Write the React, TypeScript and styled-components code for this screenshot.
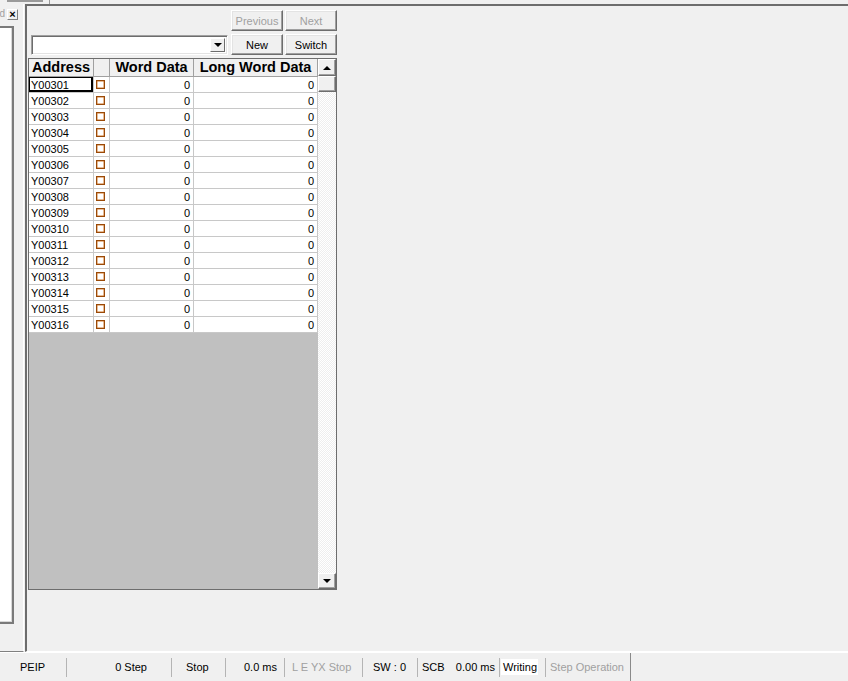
import React from 'react';
import styled, { createGlobalStyle } from 'styled-components';

const GlobalStyle = createGlobalStyle`
  html, body {
    margin: 0;
    padding: 0;
    background: #f0f0f0;
  }
  body {
    font-family: "Liberation Sans", Arial, sans-serif;
    overflow: hidden;
  }
`;

const Window = styled.div`
  width: 848px;
  height: 681px;
  display: flex;
  flex-direction: column;
  background: #f0f0f0;
  overflow: hidden;
`;

const TopStrip = styled.div`
  height: 4px;
  flex-shrink: 0;
  display: flex;
`;

const TabStub = styled.div`
  margin-left: 7px;
  width: 36px;
  height: 2px;
  background: #9a9a9a;
`;

const TabEdge = styled.div`
  margin-left: 6px;
  width: 1px;
  height: 4px;
  background: #9a9a9a;
`;

const Body = styled.div`
  flex: 1;
  display: flex;
  min-height: 0;
`;

const LeftDock = styled.div`
  width: 23px;
  margin-right: 1px;
  display: flex;
  flex-direction: column;
  border-right: 1px solid #ffffff;
  border-bottom: 1px solid #808080;
  overflow: hidden;
`;

const DockHeader = styled.div`
  height: 12px;
  padding-top: 4px;
  display: flex;
  align-items: center;
`;

const DockTitle = styled.span`
  width: 5px;
  overflow: hidden;
  direction: rtl;
  font-size: 10px;
  color: #a0a0a0;
  line-height: 12px;
`;

const CloseButton = styled.div`
  margin-left: 2px;
  width: 11px;
  height: 11px;
  box-sizing: border-box;
  border: 1px solid;
  border-color: #ffffff #808080 #808080 #ffffff;
  display: flex;
  align-items: center;
  justify-content: center;
  font-size: 11px;
  font-weight: bold;
  line-height: 9px;
  color: #000;
`;

const DockPanel = styled.div`
  margin-top: 6px;
  width: 14px;
  height: 598px;
  box-sizing: border-box;
  background: #ffffff;
  border-top: 2px solid #7a7a7a;
  border-right: 2px solid #7a7a7a;
  border-bottom: 2px solid #7a7a7a;
  box-shadow: inset -1px -1px 0 #d8d8d8;
`;

const Workspace = styled.div`
  flex: 1;
  border-top: 2px solid #6d6d6d;
  border-left: 2px solid #6d6d6d;
  border-bottom: 1px solid #ffffff;
  padding: 4px 0 0 1px;
  display: flex;
  flex-direction: column;
`;

const Controls = styled.div`
  width: 309px;
  display: flex;
  flex-direction: column;
`;

const ButtonRow = styled.div`
  height: 21px;
  display: flex;
  align-items: center;
  justify-content: flex-end;
  gap: 2px;
  & + & {
    margin-top: 3px;
  }
`;

const Button = styled.div<{ $disabled?: boolean }>`
  width: 52px;
  height: 21px;
  box-sizing: border-box;
  border: 1px solid;
  border-color: #ffffff #6d6d6d #6d6d6d #ffffff;
  box-shadow: inset -1px -1px 0 #a0a0a0, inset 1px 1px 0 #e3e3e3;
  background: #f0f0f0;
  font-size: 11px;
  color: ${({ $disabled }) => ($disabled ? '#a0a0a0' : '#000000')};
  display: flex;
  align-items: center;
  justify-content: center;
`;

const Combo = styled.div`
  margin: 0 auto 0 3px;
  width: 197px;
  height: 20px;
  box-sizing: border-box;
  border: 1px solid;
  border-color: #a0a0a0 #ffffff #ffffff #a0a0a0;
  box-shadow: inset 1px 1px 0 #6d6d6d, inset -1px -1px 0 #e3e3e3;
  background: #ffffff;
  display: flex;
  justify-content: flex-end;
  padding: 2px;
`;

const ComboButton = styled.div`
  width: 15px;
  height: 14px;
  box-sizing: border-box;
  border: 1px solid;
  border-color: #ffffff #6d6d6d #6d6d6d #ffffff;
  background: #f0f0f0;
  display: flex;
  align-items: center;
  justify-content: center;
`;

const Arrow = styled.div<{ $dir: 'up' | 'down' }>`
  width: 0;
  height: 0;
  border-left: 4px solid transparent;
  border-right: 4px solid transparent;
  ${({ $dir }) =>
    $dir === 'up' ? 'border-bottom: 4px solid #000;' : 'border-top: 4px solid #000;'}
`;

const Grid = styled.div`
  margin-top: 3px;
  width: 309px;
  height: 532px;
  box-sizing: border-box;
  border: 1px solid #6d6d6d;
  display: flex;
`;

const TableArea = styled.div`
  flex: 1;
  display: flex;
  flex-direction: column;
`;

const Row = styled.div`
  display: grid;
  grid-template-columns: 65px 16px 84px 124px;
`;

const HeadCell = styled.div`
  height: 18px;
  box-sizing: border-box;
  background: #f0f0f0;
  border-right: 1px solid #a0a0a0;
  border-bottom: 1px solid #a0a0a0;
  font-size: 14.5px;
  font-weight: bold;
  line-height: 17px;
  text-align: center;
  color: #000;
  white-space: nowrap;
`;

const Cell = styled.div<{ $align?: 'left' | 'right'; $focus?: boolean }>`
  height: 16px;
  box-sizing: border-box;
  background: #ffffff;
  border-right: 1px solid #c8c8c8;
  border-bottom: 1px solid #c8c8c8;
  font-size: 11px;
  line-height: 16px;
  color: #000;
  text-align: ${({ $align }) => $align ?? 'left'};
  padding: ${({ $align }) => ($align === 'right' ? '0 3px 0 0' : '0 0 0 2px')};
  ${({ $focus }) =>
    $focus ? 'box-shadow: inset 1px 1px 0 #000, inset -2px -2px 0 #000;' : ''}
`;

const CheckCell = styled(Cell)`
  padding: 0 0 0 2px;
  display: flex;
  align-items: center;
`;

const CheckBox = styled.div`
  width: 9px;
  height: 9px;
  box-sizing: border-box;
  border: 1px solid #9a4a08;
  box-shadow: inset 0 0 0 0.5px #d07a30;
  background: #fff;
  margin-top: -1px;
`;

const Filler = styled.div`
  flex: 1;
  background: #c0c0c0;
`;

const ScrollBar = styled.div`
  width: 18px;
  display: flex;
  flex-direction: column;
`;

const ScrollButton = styled.div<{ $h: number }>`
  height: ${({ $h }) => $h}px;
  box-sizing: border-box;
  border: 1px solid;
  border-color: #ffffff #6d6d6d #6d6d6d #ffffff;
  box-shadow: inset -1px -1px 0 #a0a0a0;
  background: #f0f0f0;
  display: flex;
  align-items: center;
  justify-content: center;
`;

const Track = styled.div`
  flex: 1;
  background-color: #ffffff;
  background-image: repeating-conic-gradient(#eeeeee 0 25%, #ffffff 0 50%);
  background-size: 2px 2px;
`;

const StatusBar = styled.div`
  height: 28px;
  border-top: 1px solid #ffffff;
  display: flex;
  align-items: center;
  font-size: 11px;
  color: #000;
`;

const StatusItem = styled.div<{
  $w: number;
  $pl?: number;
  $pr?: number;
  $align?: 'left' | 'right';
  $muted?: boolean;
  $end?: boolean;
}>`
  width: ${({ $w }) => $w}px;
  height: ${({ $end }) => ($end ? 28 : 19)}px;
  box-sizing: border-box;
  border-right: 1px solid ${({ $end }) => ($end ? '#8a8a8a' : '#b4b4b4')};
  padding-left: ${({ $pl }) => $pl ?? 0}px;
  padding-right: ${({ $pr }) => $pr ?? 0}px;
  display: flex;
  align-items: center;
  justify-content: ${({ $align }) => ($align === 'right' ? 'flex-end' : 'flex-start')};
  color: ${({ $muted }) => ($muted ? '#a0a0a0' : '#000')};
  white-space: nowrap;
`;

const SplitItem = styled(StatusItem)`
  justify-content: space-between;
`;

const Highlight = styled.span`
  background: #ffffff;
  padding: 2px 1px 2px 2px;
`;

const rows = Array.from({ length: 16 }, (_, i) => `Y003${String(i + 1).padStart(2, '0')}`);

export default function App() {
  return (
    <Window>
      <GlobalStyle />
      <TopStrip>
        <TabStub />
        <TabEdge />
      </TopStrip>
      <Body>
        <LeftDock>
          <DockHeader>
            <DockTitle>d</DockTitle>
            <CloseButton>×</CloseButton>
          </DockHeader>
          <DockPanel />
        </LeftDock>
        <Workspace>
          <Controls>
            <ButtonRow>
              <Button $disabled>Previous</Button>
              <Button $disabled>Next</Button>
            </ButtonRow>
            <ButtonRow>
              <Combo>
                <ComboButton>
                  <Arrow $dir="down" />
                </ComboButton>
              </Combo>
              <Button>New</Button>
              <Button>Switch</Button>
            </ButtonRow>
            <Grid>
              <TableArea>
                <Row>
                  <HeadCell>Address</HeadCell>
                  <HeadCell />
                  <HeadCell>Word Data</HeadCell>
                  <HeadCell>Long Word Data</HeadCell>
                </Row>
                {rows.map((addr, i) => (
                  <Row key={addr}>
                    <Cell $focus={i === 0}>{addr}</Cell>
                    <CheckCell>
                      <CheckBox />
                    </CheckCell>
                    <Cell $align="right">0</Cell>
                    <Cell $align="right">0</Cell>
                  </Row>
                ))}
                <Filler />
              </TableArea>
              <ScrollBar>
                <ScrollButton $h={17}>
                  <Arrow $dir="up" />
                </ScrollButton>
                <ScrollButton $h={16} />
                <Track />
                <ScrollButton $h={16}>
                  <Arrow $dir="down" />
                </ScrollButton>
              </ScrollBar>
            </Grid>
          </Controls>
        </Workspace>
      </Body>
      <StatusBar>
        <StatusItem $w={67} $pl={20}>PEIP</StatusItem>
        <StatusItem $w={105} $pr={24} $align="right">0 Step</StatusItem>
        <StatusItem $w={54} $pl={14}>Stop</StatusItem>
        <StatusItem $w={59} $pr={7} $align="right">0.0 ms</StatusItem>
        <StatusItem $w={78} $pl={7} $muted>L E YX Stop</StatusItem>
        <StatusItem $w={55} $pl={10}>SW : 0</StatusItem>
        <SplitItem $w={82} $pl={4} $pr={4}>
          <span>SCB</span>
          <span>0.00 ms</span>
        </SplitItem>
        <StatusItem $w={46} $pl={1}>
          <Highlight>Writing</Highlight>
        </StatusItem>
        <StatusItem $w={85} $pl={4} $muted $end>Step Operation</StatusItem>
      </StatusBar>
    </Window>
  );
}
